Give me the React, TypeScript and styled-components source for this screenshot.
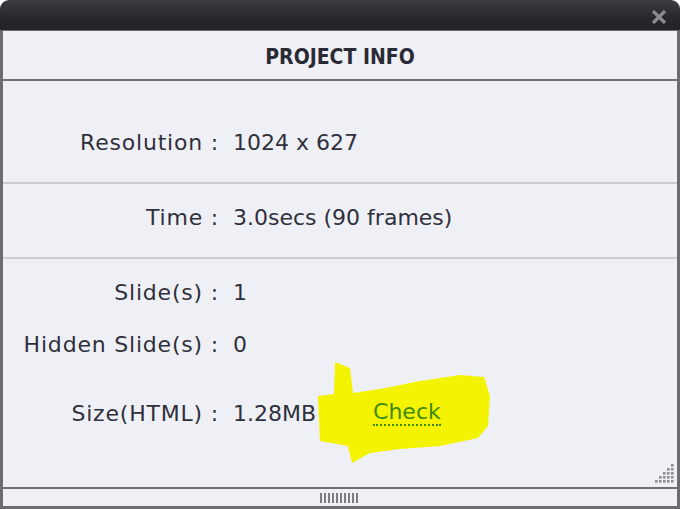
import styled, { createGlobalStyle } from 'styled-components';

const GlobalStyle = createGlobalStyle`
  html, body {
    margin: 0;
    padding: 0;
    background: #ffffff;
  }
  body {
    font-family: 'DejaVu Sans', sans-serif;
  }
`;

interface InfoRow {
  label: string;
  value: string;
  spaceBefore: number;
  check?: boolean;
}

const sections: { padTop: number; rows: InfoRow[] }[] = [
  { padTop: 46, rows: [{ label: 'Resolution :', value: '1024 x 627', spaceBefore: 0 }] },
  { padTop: 18, rows: [{ label: 'Time :', value: '3.0secs (90 frames)', spaceBefore: 0 }] },
  {
    padTop: 18,
    rows: [
      { label: 'Slide(s) :', value: '1', spaceBefore: 0 },
      { label: 'Hidden Slide(s) :', value: '0', spaceBefore: 22 },
      { label: 'Size(HTML) :', value: '1.28MB', spaceBefore: 39, check: true },
    ],
  },
];

const App = () => {
  return (
    <>
      <GlobalStyle />
      <Window>
        <TitleBar>
          <CloseButton>
            <svg width="16" height="14" viewBox="0 0 16 14">
              <path d="M2 1 L14 13 M14 1 L2 13" stroke="#8b8c90" strokeWidth="3.2" />
            </svg>
          </CloseButton>
        </TitleBar>
        <Panel>
          <Header>PROJECT INFO</Header>
          {sections.map((section, i) => (
            <Section key={i} padTop={section.padTop} last={i === sections.length - 1}>
              {section.rows.map((row) => (
                <Row key={row.label} spaceBefore={row.spaceBefore}>
                  <Label>{row.label}</Label>
                  <Value>{row.value}</Value>
                  {row.check && (
                    <>
                      <Highlight width="176" height="104" viewBox="0 0 176 104">
                        <path
                          d="M17 0 L32 6 L35 31 L62 27 L102 19 L142 13 L166 15 L172 34 L170 64 L160 76 L122 84 L82 87 L52 91 L34 101 L30 84 L2 79 L0 34 L16 32 Z"
                          fill="#f4f400"
                        />
                      </Highlight>
                      <CheckLink>Check</CheckLink>
                    </>
                  )}
                </Row>
              ))}
              {i === sections.length - 1 && (
                <Grip width="22" height="22" viewBox="0 0 22 22">
                  {[0, 1, 2, 3, 4].map((r) =>
                    Array.from({ length: r + 1 }).map((_, c) => (
                      <rect
                        key={`${r}-${c}`}
                        x={18 - c * 4}
                        y={2 + r * 4}
                        width="2.6"
                        height="2.6"
                        fill="#8d8e93"
                      />
                    ))
                  )}
                </Grip>
              )}
            </Section>
          ))}
          <Footer>
            <svg width="40" height="10" viewBox="0 0 40 10">
              {Array.from({ length: 10 }).map((_, k) => (
                <rect key={k} x={k * 4} y="0" width="2" height="10" fill="#7b7c80" />
              ))}
            </svg>
          </Footer>
        </Panel>
      </Window>
    </>
  );
};

const Window = styled.div`
  width: 680px;
  height: 509px;
  display: flex;
  flex-direction: column;
  overflow: hidden;
`;

const TitleBar = styled.div`
  height: 30px;
  flex-shrink: 0;
  background: linear-gradient(#3b3d43, #26282d 60%, #222428);
  border-radius: 9px 9px 0 0;
  display: flex;
  justify-content: flex-end;
  align-items: center;
`;

const CloseButton = styled.div`
  width: 16px;
  height: 14px;
  margin-right: 13px;
  margin-top: 4px;
  display: flex;
`;

const Panel = styled.div`
  flex: 1;
  display: flex;
  flex-direction: column;
  background: #eff0f5;
  border-left: 3px solid #6c6d71;
  border-right: 3px solid #6c6d71;
  border-bottom: 3px solid #6c6d71;
`;

const Header = styled.div`
  height: 51px;
  flex-shrink: 0;
  box-sizing: border-box;
  padding-top: 4px;
  border-top: 1px solid #6c6d71;
  border-bottom: 2px solid #707175;
  display: flex;
  align-items: center;
  justify-content: center;
  font-family: 'DejaVu Sans Condensed', 'DejaVu Sans', sans-serif;
  font-weight: bold;
  font-size: 21px;
  color: #2a2a35;
`;

const Section = styled.div<{ padTop: number; last: boolean }>`
  position: relative;
  display: flex;
  flex-direction: column;
  padding-top: ${(p) => p.padTop}px;
  padding-bottom: 25px;
  flex: ${(p) => (p.last ? 1 : 'none')};
  border-bottom: ${(p) => (p.last ? '2px solid #6e6f73' : '2px solid #cbccd1')};
`;

const Row = styled.div<{ spaceBefore: number }>`
  position: relative;
  height: 30px;
  margin-top: ${(p) => p.spaceBefore}px;
  display: flex;
  align-items: center;
  font-size: 22px;
  color: #2f303b;
`;

const Label = styled.span`
  width: 216px;
  text-align: right;
  flex-shrink: 0;
  letter-spacing: 0.8px;
`;

const Value = styled.span`
  margin-left: 14px;
`;

const Highlight = styled.svg`
  position: absolute;
  left: 315px;
  top: -36px;
`;

const CheckLink = styled.span`
  position: relative;
  margin-left: 57px;
  color: #3d8a12;
  border-bottom: 2px dotted #3d8a12;
  line-height: 24px;
`;

const Grip = styled.svg`
  position: absolute;
  right: 2px;
  bottom: 3px;
`;

const Footer = styled.div`
  height: 16px;
  display: flex;
  align-items: center;
  justify-content: center;
  padding-top: 1px;
`;

export default App;
